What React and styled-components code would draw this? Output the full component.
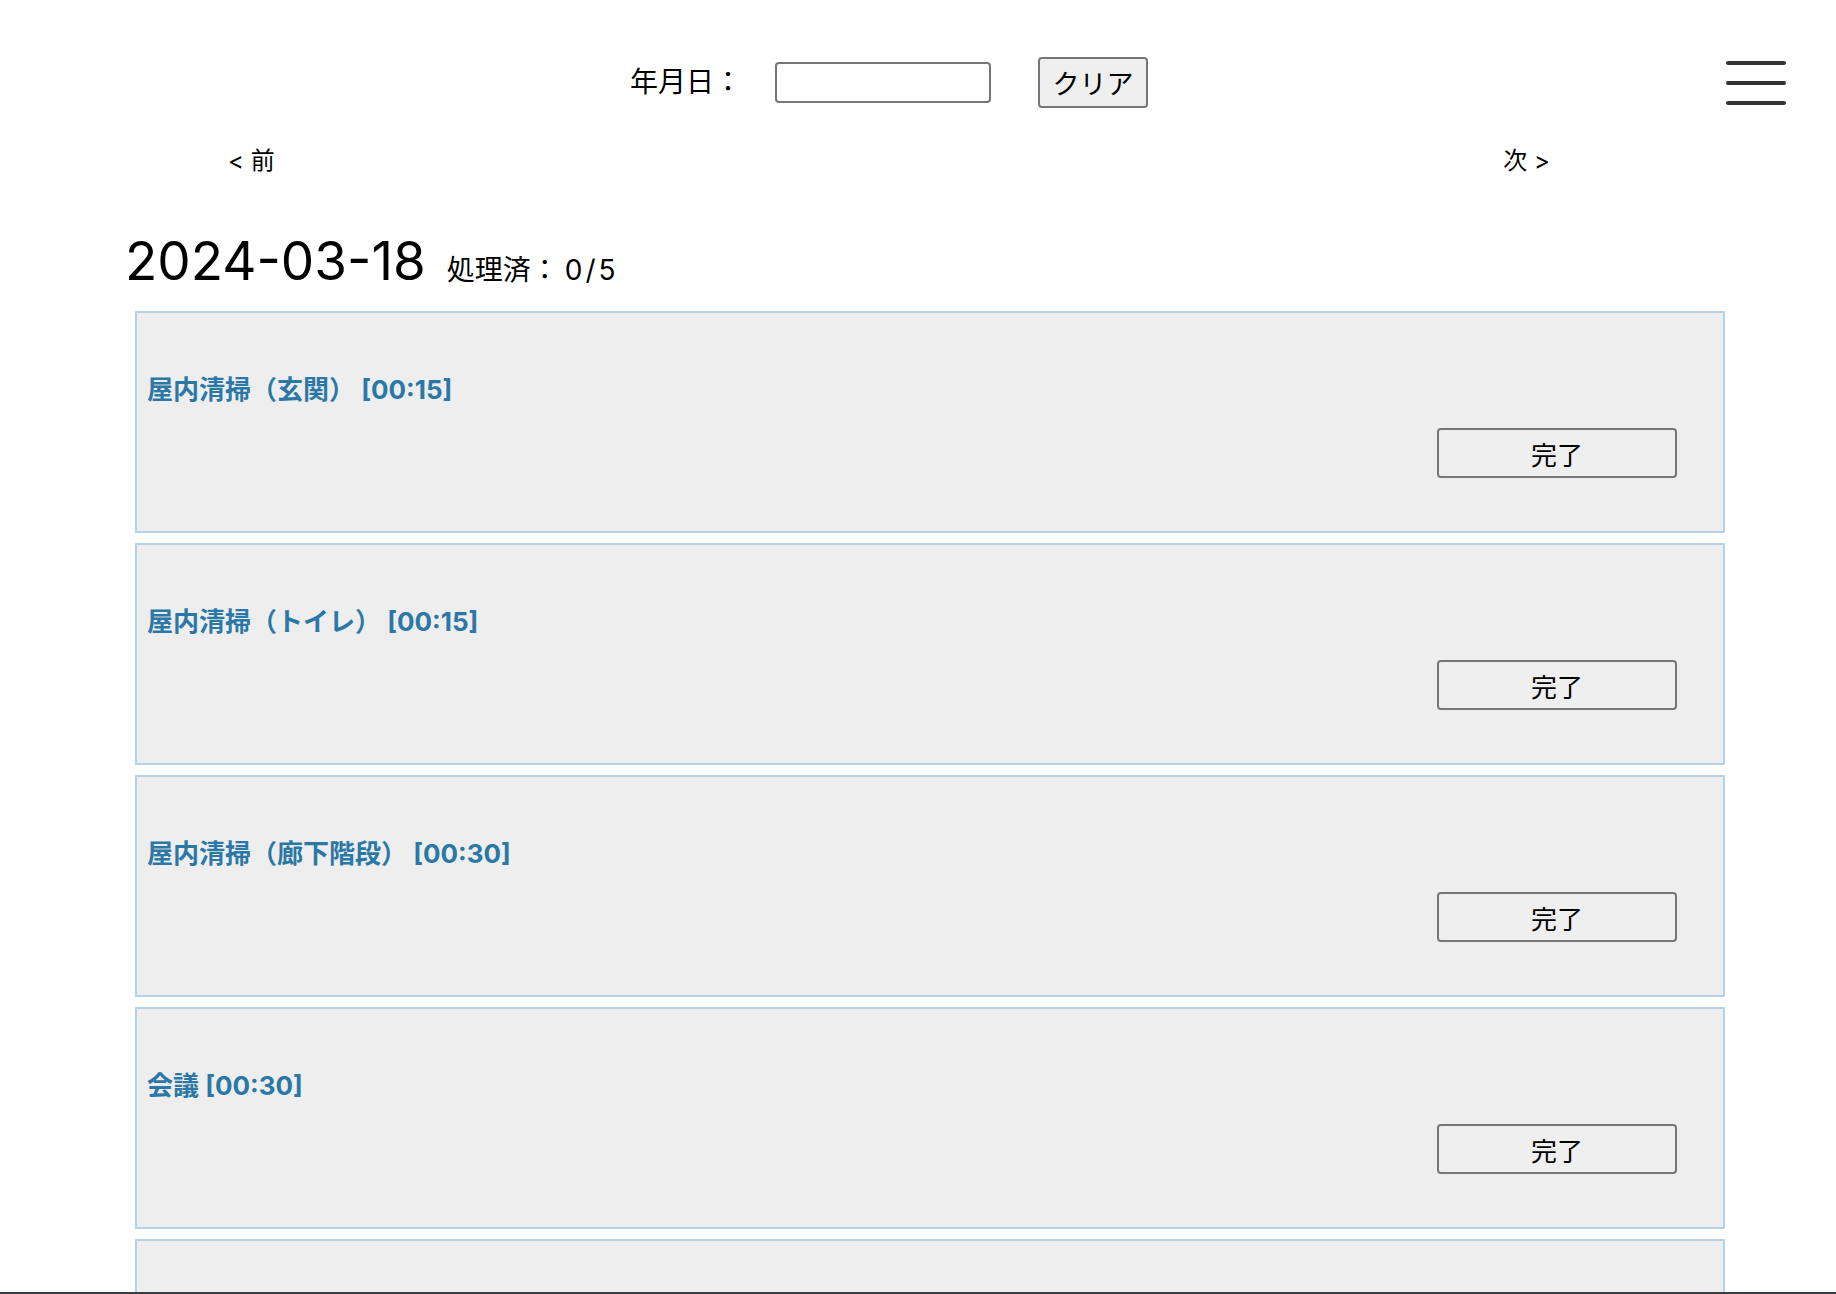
import React from "react";
import styled, { createGlobalStyle } from "styled-components";

const fontStack = `"Inter", "Noto Sans CJK JP", sans-serif`;
const borderGray = "#767676";
const cardBorder = "#b4d3ea";
const titleBlue = "#2b78a6";

const GlobalStyle = createGlobalStyle`
  html, body {
    margin: 0;
    padding: 0;
    background: #ffffff;
    color: #000000;
    font-family: ${fontStack};
  }
`;

const Page = styled.div`
  padding-bottom: 40px;
`;

const Header = styled.header`
  display: flex;
  align-items: center;
  padding: 57px 50px 0 630px;
  height: 51px;
`;

const Label = styled.label`
  font-size: 28px;
  line-height: 51px;
  margin-right: 33px;
`;

const DateInput = styled.input`
  box-sizing: border-box;
  width: 216px;
  height: 41px;
  border: 2px solid ${borderGray};
  border-radius: 4px;
  background: #ffffff;
  padding: 0 8px;
  font-size: 22px;
  font-family: ${fontStack};
`;

const GrayButton = styled.button`
  box-sizing: border-box;
  border: 2px solid ${borderGray};
  border-radius: 4px;
  background: #efefef;
  color: #000000;
  font-family: ${fontStack};
  font-size: 26px;
  cursor: pointer;
`;

const ClearButton = styled(GrayButton)`
  margin-left: 47px;
  width: 110px;
  height: 51px;
  padding: 0;
  font-size: 27px;
`;

const Hamburger = styled.button`
  margin-left: auto;
  display: flex;
  flex-direction: column;
  gap: 16px;
  padding: 0;
  border: none;
  background: none;
  cursor: pointer;
`;

const Bar = styled.span`
  display: block;
  width: 60px;
  height: 4px;
  border-radius: 2px;
  background: #333333;
`;

const Nav = styled.nav`
  display: flex;
  justify-content: space-between;
  padding: 0 286px 0 228px;
  margin-top: 37px;
  font-size: 24px;
  line-height: 32px;
`;

const NavLink = styled.a`
  color: #000000;
  text-decoration: none;
  cursor: pointer;
`;

const Heading = styled.h2`
  margin: 54px 0 11px;
  padding-left: 125px;
  font-size: 53px;
  font-weight: normal;
  line-height: 60px;
`;

const Progress = styled.span`
  margin-left: 21px;
  font-size: 28px;
`;

const Count = styled.span`
  margin-left: 6px;
  letter-spacing: 3px;
`;

const List = styled.div`
  display: flex;
  flex-direction: column;
  gap: 10px;
  padding: 0 111px 0 135px;
`;

const Card = styled.div`
  display: flex;
  flex-direction: column;
  border: 2px solid ${cardBorder};
  background: #eeeeee;
  padding: 59px 46px 53px 10px;
`;

const TaskTitle = styled.div`
  color: ${titleBlue};
  font-size: 26px;
  font-weight: bold;
  line-height: 36px;
`;

const DoneButton = styled(GrayButton)`
  align-self: flex-end;
  margin-top: 20px;
  width: 240px;
  height: 50px;
`;

const BottomEdge = styled.div`
  position: fixed;
  left: 0;
  right: 0;
  bottom: 0;
  height: 2px;
  background: #3a3d40;
`;

const tasks = [
  { id: 1, name: "屋内清掃（玄関）", time: "00:15" },
  { id: 2, name: "屋内清掃（トイレ）", time: "00:15" },
  { id: 3, name: "屋内清掃（廊下階段）", time: "00:30" },
  { id: 4, name: "会議", time: "00:30" },
  { id: 5, name: "屋外清掃", time: "00:30" },
];

export default function App() {
  const done = 0;

  return (
    <Page>
      <GlobalStyle />
      <Header>
        <Label htmlFor="date">年月日：</Label>
        <DateInput id="date" type="text" />
        <ClearButton>クリア</ClearButton>
        <Hamburger aria-label="menu">
          <Bar />
          <Bar />
          <Bar />
        </Hamburger>
      </Header>

      <Nav>
        <NavLink>&lt; 前</NavLink>
        <NavLink>次 &gt;</NavLink>
      </Nav>

      <Heading>
        2024-03-18
        <Progress>
          処理済：<Count>{done}/{tasks.length}</Count>
        </Progress>
      </Heading>

      <List>
        {tasks.map((task) => (
          <Card key={task.id}>
            <TaskTitle>
              {task.name} [{task.time}]
            </TaskTitle>
            <DoneButton>完了</DoneButton>
          </Card>
        ))}
      </List>
      <BottomEdge />
    </Page>
  );
}
